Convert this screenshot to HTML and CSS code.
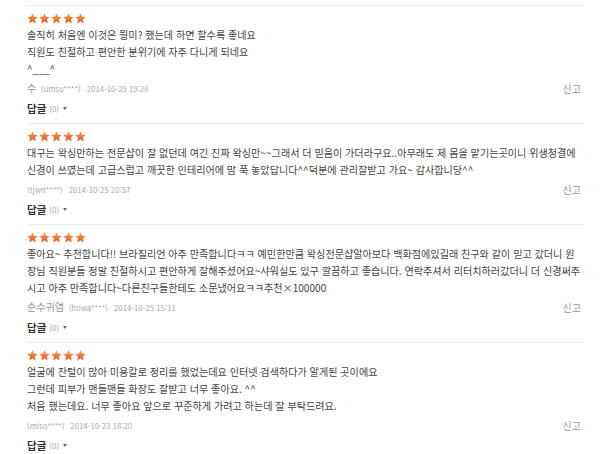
FILE: index.html
```html
<!DOCTYPE html>
<html lang="ko">
<head>
<meta charset="utf-8">
<link rel="stylesheet" href="styles.css">
</head>
<body>
<svg class="defs" width="0" height="0">
  <defs>
    <linearGradient id="sg" x1="0" y1="0" x2="0" y2="1">
      <stop offset="0" stop-color="#ff9a52"/>
      <stop offset="1" stop-color="#ec5414"/>
    </linearGradient>
    <symbol id="star" viewBox="0 0 12 12">
      <polygon points="6,0.3 7.6,4.1 11.7,4.4 8.6,7.1 9.5,11.4 6,9.1 2.5,11.4 3.4,7.1 0.3,4.4 4.4,4.1" fill="url(#sg)"/>
    </symbol>
  </defs>
</svg>
<div class="list">
  <div class="review">
    <div class="stars"><svg viewBox="0 0 12 12"><use href="#star"/></svg><svg viewBox="0 0 12 12"><use href="#star"/></svg><svg viewBox="0 0 12 12"><use href="#star"/></svg><svg viewBox="0 0 12 12"><use href="#star"/></svg><svg viewBox="0 0 12 12"><use href="#star"/></svg></div>
    <div class="text">
      <div>솔직히 처음엔 이것은 뭥미? 했는데 하면 할수록 좋네요</div>
      <div>직원도 친절하고 편안한 분위기에 자주 다니게 되네요</div>
      <div>^___^</div>
    </div>
    <div class="meta">
      <div class="who"><span class="name">수</span> <span class="id">(umsu****)</span><span class="date">2014-10-29 19:26</span></div>
      <span class="report">신고</span>
    </div>
    <div class="reply"><span class="rl">답글</span><span class="cnt">(0)</span><span class="caret"></span></div>
  </div>
  <div class="review">
    <div class="stars"><svg viewBox="0 0 12 12"><use href="#star"/></svg><svg viewBox="0 0 12 12"><use href="#star"/></svg><svg viewBox="0 0 12 12"><use href="#star"/></svg><svg viewBox="0 0 12 12"><use href="#star"/></svg><svg viewBox="0 0 12 12"><use href="#star"/></svg></div>
    <div class="text">
      <div>대구는 왁싱만하는 전문샵이 잘 없던데 여긴 진짜 왁싱만~~그래서 더 믿음이 가더라구요..아무래도 제 몸을 맡기는곳이니 위생청결에</div>
      <div>신경이 쓰였는데 고급스럽고 깨끗한 인테리어에 맘 푹 놓았답니다^^덕분에 관리잘받고 가요~ 감사합니당^^</div>
    </div>
    <div class="meta">
      <div class="who"><span class="name"></span> <span class="id">(tjwn****)</span><span class="date">2014-10-25 20:57</span></div>
      <span class="report">신고</span>
    </div>
    <div class="reply"><span class="rl">답글</span><span class="cnt">(0)</span><span class="caret"></span></div>
  </div>
  <div class="review">
    <div class="stars"><svg viewBox="0 0 12 12"><use href="#star"/></svg><svg viewBox="0 0 12 12"><use href="#star"/></svg><svg viewBox="0 0 12 12"><use href="#star"/></svg><svg viewBox="0 0 12 12"><use href="#star"/></svg><svg viewBox="0 0 12 12"><use href="#star"/></svg></div>
    <div class="text">
      <div>좋아요~ 추천합니다!! 브라질리언 아주 만족합니다ㅋㅋ 예민한만큼 왁싱전문샵알아보다 백화점에있길래 친구와 같이 믿고 갔더니 원</div>
      <div>장님 직원분들 정말 친절하시고 편안하게 잘해주셨어요~샤워실도 있구 깔끔하고 좋습니다. 연락주셔서 리터치하러갔더니 더 신경써주</div>
      <div>시고 아주 만족합니다~다른친구들한테도 소문냈어요ㅋㅋ추천×100000</div>
    </div>
    <div class="meta">
      <div class="who"><span class="name">순수귀염</span> <span class="id">(howa****)</span><span class="date">2014-10-25 15:11</span></div>
      <span class="report">신고</span>
    </div>
    <div class="reply"><span class="rl">답글</span><span class="cnt">(0)</span><span class="caret"></span></div>
  </div>
  <div class="review">
    <div class="stars"><svg viewBox="0 0 12 12"><use href="#star"/></svg><svg viewBox="0 0 12 12"><use href="#star"/></svg><svg viewBox="0 0 12 12"><use href="#star"/></svg><svg viewBox="0 0 12 12"><use href="#star"/></svg><svg viewBox="0 0 12 12"><use href="#star"/></svg></div>
    <div class="text">
      <div>얼굴에 잔털이 많아 미용칼로 정리를 했었는데요 인터넷 검색하다가 알게된 곳이에요</div>
      <div>그런데 피부가 맨들맨들 화장도 잘받고 너무 좋아요. ^^</div>
      <div>처음 했는데요. 너무 좋아요 앞으로 꾸준하게 가려고 하는데 잘 부탁드려요.</div>
    </div>
    <div class="meta">
      <div class="who"><span class="name"></span> <span class="id">(miso****)</span><span class="date">2014-10-23 18:20</span></div>
      <span class="report">신고</span>
    </div>
    <div class="reply"><span class="rl">답글</span><span class="cnt">(0)</span><span class="caret"></span></div>
  </div>
</div>
</body>
</html>
```
FILE: styles.css
```css
html, body {
  margin: 0;
  padding: 0;
  background: #fff;
}
body {
  font-family: "Noto Sans CJK KR", "Noto Sans", sans-serif;
  color: #444;
}
.defs {
  position: absolute;
  width: 0;
  height: 0;
}
.list {
  margin: 5px 17px 0 27px;
}
.review {
  border-top: 1px solid #ececec;
  padding: 7px 0 6px;
}
.stars {
  display: flex;
  gap: 1px;
  height: 11px;
}
.stars svg {
  width: 11px;
  height: 11px;
  display: block;
}
.text {
  margin-top: 2px;
  font-size: 10.1px;
  line-height: 17px;
  white-space: nowrap;
}
.meta {
  display: flex;
  justify-content: space-between;
  height: 17px;
  line-height: 17px;
}
.who {
  white-space: nowrap;
}
.name {
  font-size: 10.1px;
  color: #999;
}
.id {
  font-size: 7.8px;
  color: #aaa;
  margin-right: 6px;
}
.date {
  font-size: 7.8px;
  color: #aaa;
}
.report {
  font-size: 10px;
  color: #999;
  margin-top: 3px;
  margin-right: 2px;
}
.reply {
  margin-top: 6px;
  height: 17px;
  line-height: 17px;
  display: flex;
  align-items: center;
}
.rl {
  font-size: 10.5px;
  font-weight: bold;
  color: #333;
}
.cnt {
  font-size: 8px;
  color: #aaa;
  margin-left: 3px;
}
.caret {
  width: 0;
  height: 0;
  border-left: 2px solid transparent;
  border-right: 2px solid transparent;
  border-top: 3px solid #666;
  margin-left: 4px;
}
```
